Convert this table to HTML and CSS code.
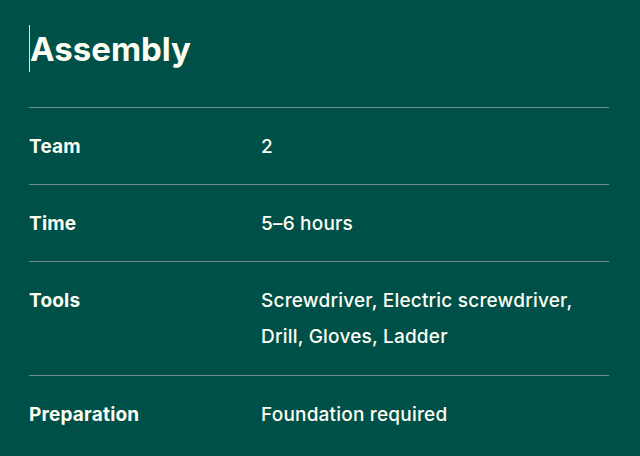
FILE: index.html
```html
<!DOCTYPE html>
<html lang="en">
<head>
<meta charset="utf-8">
<title>Assembly</title>
<link rel="stylesheet" href="styles.css">
</head>
<body>
<main class="panel">
  <h1 class="title"><span class="caret"></span>Assembly</h1>
  <dl class="specs">
    <div class="row"><dt>Team</dt><dd>2</dd></div>
    <div class="row"><dt>Time</dt><dd>5–6 hours</dd></div>
    <div class="row tall"><dt>Tools</dt><dd>Screwdriver, Electric screwdriver,<br>Drill, Gloves, Ladder</dd></div>
    <div class="row"><dt>Preparation</dt><dd>Foundation required</dd></div>
  </dl>
</main>
</body>
</html>
```

FILE: styles.css
```css
html, body {
  margin: 0;
  padding: 0;
  background: #00504a;
  height: 100%;
  overflow: hidden;
}
.panel {
  padding: 25px 31px 0 29px;
  color: #fdfdf2;
  font-family: Inter, "Noto Sans", sans-serif;
}
.title {
  margin: 0 0 35px 0;
  font-size: 33px;
  font-weight: 700;
  line-height: 49px;
  height: 47px;
  display: flex;
  align-items: stretch;
}
.caret {
  width: 1px;
  background: #d9e3e0;
}
.specs {
  margin: 0;
}
.row {
  display: grid;
  grid-template-columns: 232px 1fr;
  border-top: 1px solid #6e8d8b;
  padding: 21px 0 19px;
  font-size: 19px;
  line-height: 36px;
  letter-spacing: 0.2px;
}
.row.tall {
  padding-bottom: 20px;
}
dt {
  font-weight: 700;
}
dd {
  margin: 0;
  font-weight: 500;
}
```
